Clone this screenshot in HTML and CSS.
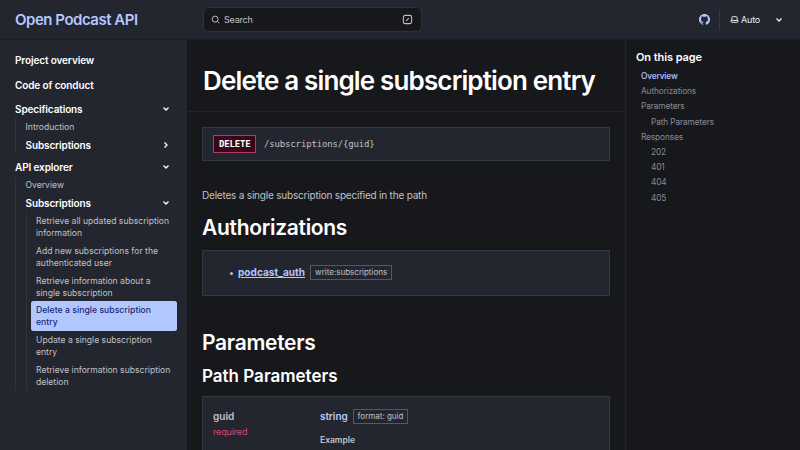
FILE: index.html
```html
<!DOCTYPE html>
<html lang="en">
<head>
<meta charset="utf-8">
<title>Delete a single subscription entry | Open Podcast API</title>
<link rel="stylesheet" href="styles.css">
</head>
<body>
<header class="header">
  <a class="site-title">Open Podcast API</a>
  <div class="search">
    <svg class="i-search" viewBox="0 0 24 24"><circle cx="11" cy="11" r="8"/><path d="M17 17l5 5"/></svg>
    <span>Search</span>
    <svg class="i-slash" viewBox="0 0 24 24"><rect x="3" y="3" width="18" height="18" rx="4"/><path d="M9 15l6-6"/></svg>
  </div>
  <div class="tools">
    <svg class="i-github" viewBox="0 0 16 16"><path d="M8 0C3.58 0 0 3.58 0 8c0 3.54 2.29 6.53 5.47 7.59.4.07.55-.17.55-.38 0-.19-.01-.82-.01-1.49-2.01.37-2.53-.49-2.69-.94-.09-.23-.48-.94-.82-1.13-.28-.15-.68-.52-.01-.53.63-.01 1.08.58 1.23.82.72 1.21 1.87.87 2.33.66.07-.52.28-.87.51-1.07-1.78-.2-3.64-.89-3.64-3.95 0-.87.31-1.59.82-2.15-.08-.2-.36-1.02.08-2.12 0 0 .67-.21 2.2.82.64-.18 1.32-.27 2-.27s1.36.09 2 .27c1.53-1.04 2.2-.82 2.2-.82.44 1.1.16 1.92.08 2.12.51.56.82 1.27.82 2.15 0 3.07-1.87 3.75-3.65 3.95.29.25.54.73.54 1.48 0 1.07-.01 1.93-.01 2.2 0 .21.15.46.55.38A8.01 8.01 0 0 0 16 8c0-4.42-3.58-8-8-8z"/></svg>
    <div class="theme">
      <svg class="i-laptop" viewBox="0 0 24 24"><path d="M5 14V7a2.500 2.500 0 0 1 2.500-2.500h9A2.500 2.500 0 0 1 19 7v7M2.500 14.500h19v2a3 3 0 0 1-3 3h-13a3 3 0 0 1-3-3z"/></svg>
      <span>Auto</span>
      <svg class="caret" viewBox="0 0 10 10"><path d="M2.500 3.500l2.500 2.500 2.500-2.500"/></svg>
    </div>
  </div>
</header>
<div class="layout">
  <nav class="sidebar">
    <a class="top">Project overview</a>
    <a class="top">Code of conduct</a>
    <div class="group">Specifications<svg class="caret" viewBox="0 0 10 10"><path d="M2.500 3.500l2.500 2.500 2.500-2.500"/></svg></div>
    <div class="branch">
      <a class="leaf">Introduction</a>
      <div class="group">Subscriptions<svg class="caret" viewBox="0 0 10 10"><path d="M3.500 2.500l2.500 2.500-2.500 2.500"/></svg></div>
    </div>
    <div class="group second">API explorer<svg class="caret" viewBox="0 0 10 10"><path d="M2.500 3.500l2.500 2.500 2.500-2.500"/></svg></div>
    <div class="branch">
      <a class="leaf">Overview</a>
      <div class="group">Subscriptions<svg class="caret" viewBox="0 0 10 10"><path d="M2.500 3.500l2.500 2.500 2.500-2.500"/></svg></div>
      <div class="branch">
        <a class="leaf">Retrieve all updated subscription<br>information</a>
        <a class="leaf">Add new subscriptions for the<br>authenticated user</a>
        <a class="leaf">Retrieve information about a<br>single subscription</a>
        <a class="leaf current">Delete a single subscription<br>entry</a>
        <a class="leaf">Update a single subscription<br>entry</a>
        <a class="leaf">Retrieve information subscription<br>deletion</a>
      </div>
    </div>
  </nav>
  <main class="main">
    <div class="hero"><h1>Delete a single subscription entry</h1></div>
    <div class="content">
      <div class="panel operation"><span class="method">DELETE</span><code>/subscriptions/{guid}</code></div>
      <p class="description">Deletes a single subscription specified in the path</p>
      <h2>Authorizations</h2>
      <div class="panel auth"><i class="bullet"></i><a class="auth-link">podcast_auth</a><span class="tag">write:subscriptions</span></div>
      <h2>Parameters</h2>
      <h3>Path Parameters</h3>
      <div class="panel params">
        <div><div class="name">guid</div><div class="required">required</div></div>
        <div><div class="type"><span class="kind">string</span><span class="tag">format: guid</span></div><div class="example">Example</div></div>
      </div>
    </div>
  </main>
  <aside class="toc">
    <h4>On this page</h4>
    <a class="active">Overview</a>
    <a>Authorizations</a>
    <a>Parameters</a>
    <a class="sub">Path Parameters</a>
    <a>Responses</a>
    <a class="sub">202</a>
    <a class="sub">401</a>
    <a class="sub">404</a>
    <a class="sub">405</a>
  </aside>
</div>
</body>
</html>
```
FILE: styles.css
```css
* { box-sizing: border-box; }
body { margin: 0; height: 450px; overflow: hidden; background: #17181c; color: #c0c2c7; font-family: Inter, "Liberation Sans", sans-serif; font-size: 10px; }
h1, h2, h3, h4, p { margin: 0; color: #fff; font-weight: 600; }
svg { fill: none; stroke: currentColor; flex: none; }
.header { display: flex; align-items: center; height: 40px; padding: 0 15px; background: #23262f; border-bottom: 1px solid #1c1e25; }
.site-title { width: 188px; font-size: 15px; font-weight: 600; letter-spacing: -0.480px; color: #b3c7ff; white-space: nowrap; }
.search { display: flex; align-items: center; width: 219px; height: 25px; padding: 0 8px 0 7px; border: 1px solid #2f323b; border-radius: 5px; background: #17181c; font-size: 9px; letter-spacing: -0.200px; }
.i-search { width: 9px; height: 9px; margin-right: 4px; stroke-width: 2.500; }
.i-slash { width: 11px; height: 11px; margin-left: auto; stroke-width: 2.300; }
.tools { display: flex; align-items: center; margin-left: auto; }
.i-github { width: 11px; height: 11px; margin-right: 9px; fill: #b3c7ff; stroke: none; }
.theme { display: flex; align-items: center; height: 20px; padding-left: 10px; border-left: 1px solid #353841; color: #eceef2; font-size: 9px; letter-spacing: -0.200px; }
.i-laptop { width: 9px; height: 9px; margin-right: 2px; stroke-width: 2.500; }
.caret { width: 10px; height: 10px; stroke-width: 1.300; }
.theme .caret { margin-left: 14px; margin-right: 1px; }
.layout { display: flex; height: 410px; }
.sidebar { flex: none; width: 187px; padding: 8px 10px 0 15px; background: #23262f; }
.top { display: block; height: 25px; line-height: 25px; font-size: 10px; font-weight: 600; letter-spacing: -0.120px; color: #fff; }
.group { display: flex; align-items: center; justify-content: space-between; height: 18px; padding-right: 6px; font-size: 10px; font-weight: 600; letter-spacing: -0.120px; color: #fff; }
.sidebar > .group { height: 20px; margin-top: 1px; }
.sidebar > .group.second { margin-top: 3px; }
.branch { border-left: 1px solid #30333c; padding-left: 10px; }
.branch > .group { text-indent: -0.500px; }
.leaf { display: block; padding: 2px 0 3px; font-size: 8.600px; line-height: 12px; color: #c0c2c7; white-space: nowrap; }
.branch > .leaf { text-indent: -0.500px; }
.branch .branch { padding-left: 4px; }
.branch .branch .leaf { padding: 3px 5px 2.800px; margin-right: -2px; text-indent: 0; }
.branch .branch .leaf.current { border-radius: 2.500px; background: #b3c7ff; color: #182775; font-weight: 500; letter-spacing: 0.050px; margin-right: 0; }
.main { flex: none; width: 438px; }
.hero { height: 72px; padding: 20px 15px 0 16px; border-bottom: 1px solid #22242a; }
h1 { font-size: 26px; line-height: 42px; letter-spacing: -0.850px; white-space: nowrap; }
.content { padding: 15px 15px 0; }
.panel { background: #23262f; border: 1px solid #353841; }
.operation { display: flex; align-items: center; height: 34px; padding-left: 10px; }
.method { width: 43px; height: 18px; padding: 0 5px; border: 1px solid #b13a60; background: #39061a; color: #fff; font: 700 9px/16px "DejaVu Sans Mono", monospace; letter-spacing: -0.150px; }
code { margin-left: 8px; font: 9px "DejaVu Sans Mono", monospace; letter-spacing: -0.150px; }
.description { margin: 27px 0 12px; line-height: 15px; font-size: 10px; font-weight: 400; letter-spacing: -0.200px; color: #c0c2c7; }
h2 { font-size: 21px; line-height: 25px; letter-spacing: -0.300px; }
.auth { display: flex; align-items: center; height: 46px; margin: 10px 0 34px; padding-left: 26px; }
.auth .tag { position: relative; top: -1px; }
.bullet { width: 3px; height: 3px; margin: 0 5px 0 1px; border-radius: 50%; background: #c0c2c7; }
.auth-link { position: relative; top: -1px; font-size: 10px; font-weight: 700; letter-spacing: 0.050px; color: #b3c7ff; text-decoration: underline; }
.tag { height: 15px; margin-left: 5px; padding: 0 4px; border: 1px solid #555861; font-size: 8px; line-height: 13px; }
h3 { margin: 11px 0 10px; font-size: 17px; line-height: 20px; }
.params { display: grid; grid-template-columns: 107px 1fr; height: 70px; padding: 11px 10px; }
.name { font-weight: 600; line-height: 16px; }
.required { font-size: 9px; line-height: 16px; letter-spacing: -0.150px; color: #d9457a; }
.type { display: flex; align-items: center; height: 16px; }
.kind { font-weight: 600; letter-spacing: -0.080px; color: #b3c7ff; }
.example { margin-top: 8px; font-size: 8.500px; font-weight: 600; line-height: 16px; }
.toc { flex: 1; padding: 8px 10px; border-left: 1px solid #24262c; }
h4 { height: 20px; line-height: 19px; font-size: 11px; letter-spacing: -0.080px; }
.toc a { display: block; padding-left: 5px; height: 15.200px; line-height: 16px; font-size: 8.300px; letter-spacing: -0.120px; color: #888b96; }
.toc a.sub { padding-left: 15px; }
.toc a.active { font-weight: 500; color: #b3c7ff; }
```
